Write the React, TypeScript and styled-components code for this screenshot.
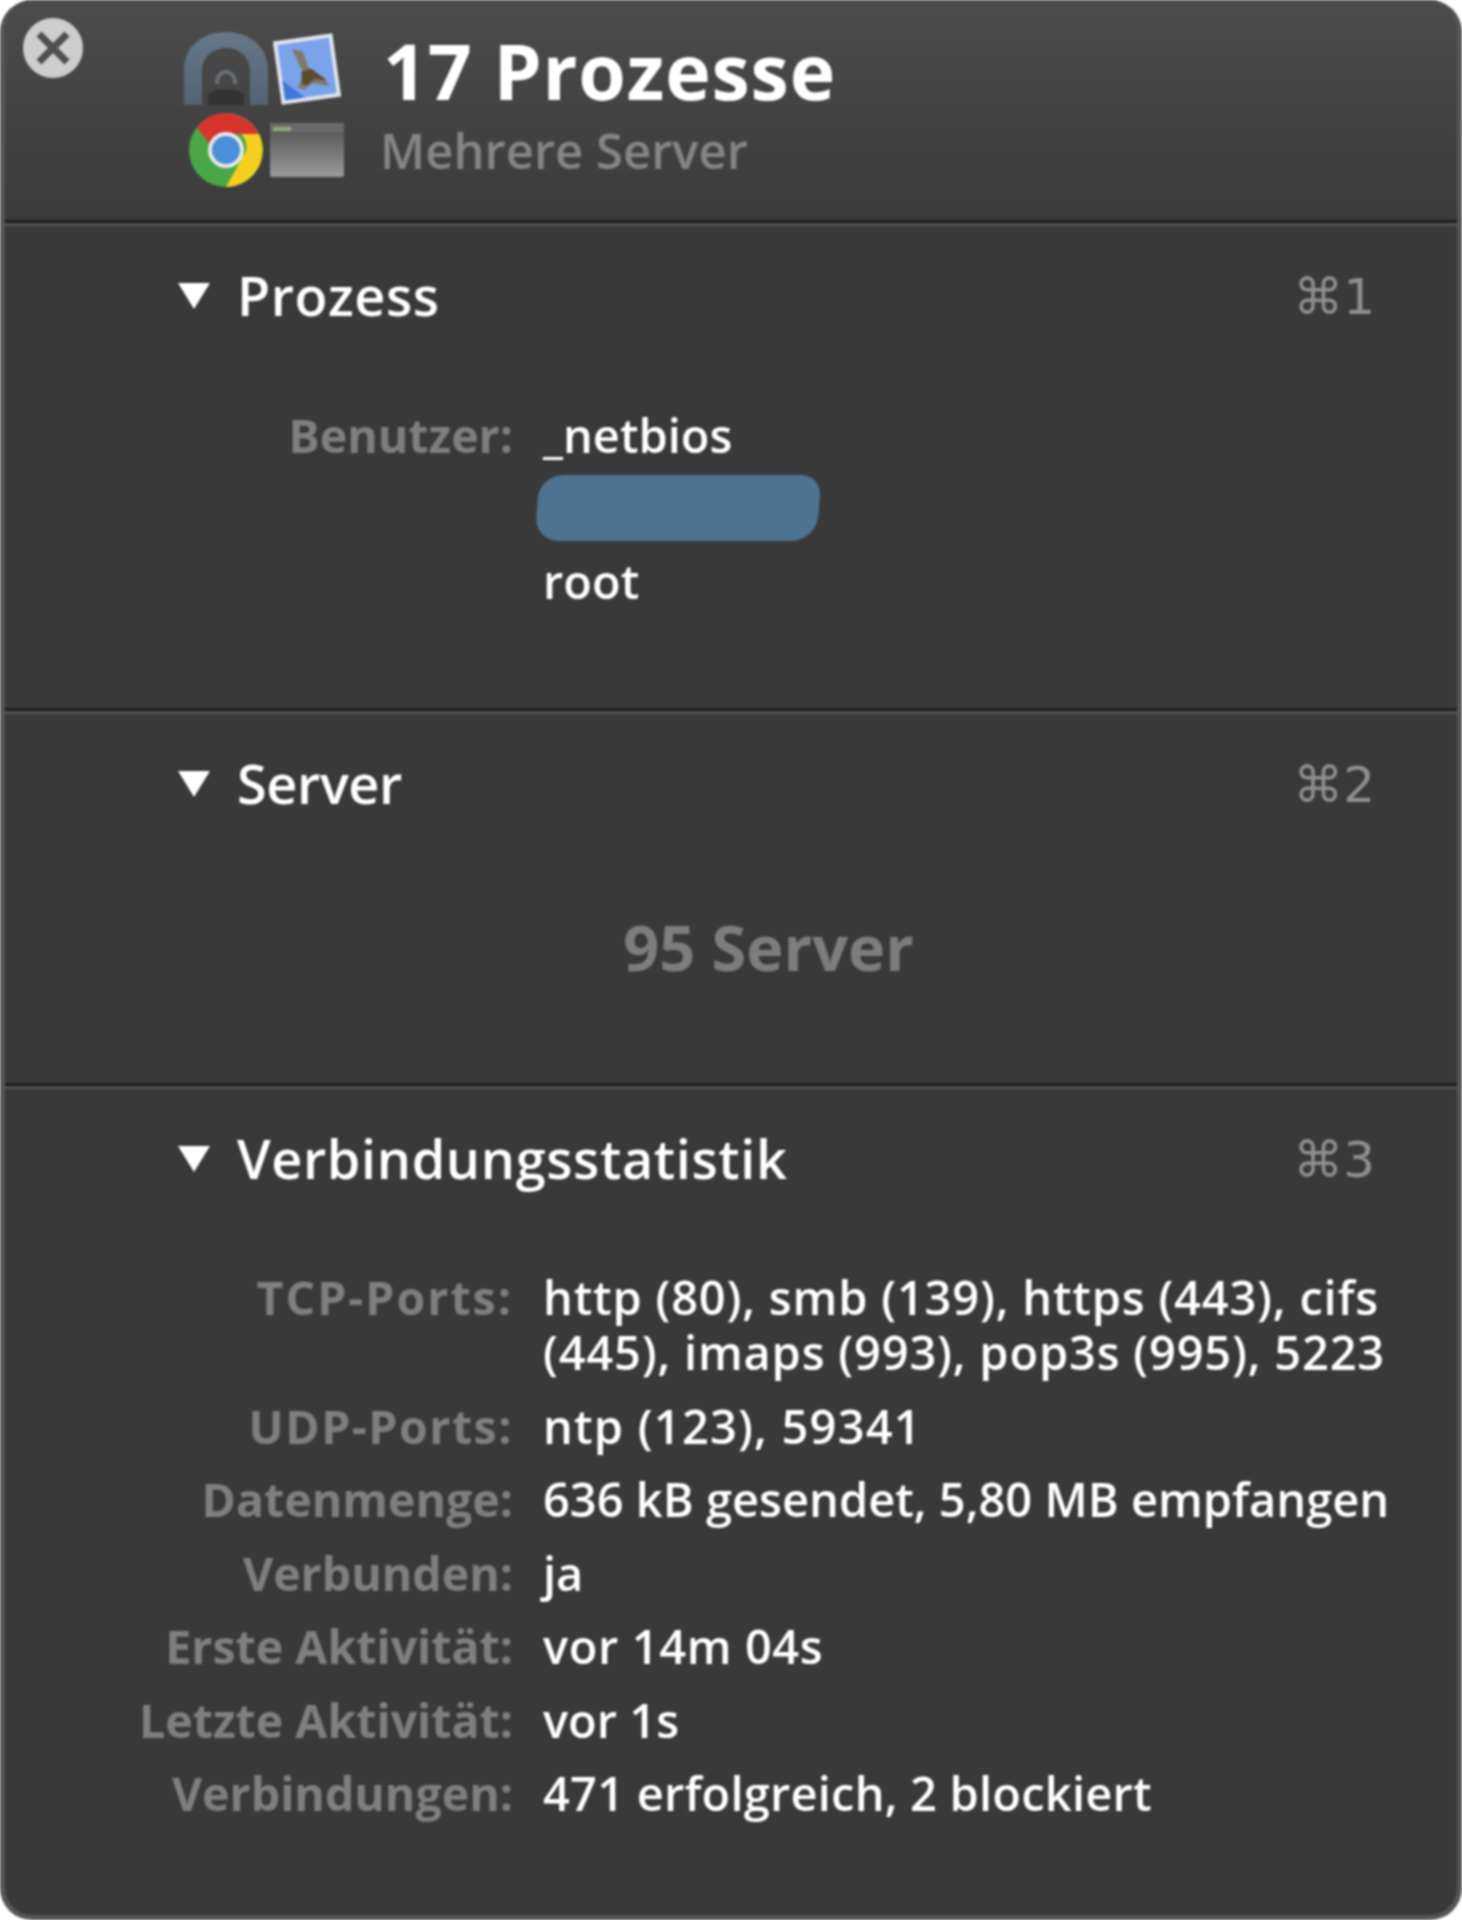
import React from 'react';
import styled, { createGlobalStyle } from 'styled-components';

const GlobalStyle = createGlobalStyle`
  html, body {
    margin: 0;
    background: #fff;
  }
`;

const Panel = styled.div`
  box-sizing: border-box;
  width: 1462px;
  height: 1920px;
  border-radius: 32px;
  overflow: hidden;
  position: relative;
  background: #393939;
  border-left: 5px solid #555;
  border-right: 5px solid #555;
  border-bottom: 5px solid #555;
  font-family: "Open Sans", "Liberation Sans", sans-serif;
  color: #fff;
  filter: blur(1px);
`;

const Header = styled.header`
  height: 223px;
  box-sizing: border-box;
  display: flex;
  padding: 26px 0 0 178px;
  gap: 40px;
  background: linear-gradient(#4c4c4c, #3b3b3b);
  border-bottom: 3px solid #1f1f1f;
`;

const CloseButton = styled.div`
  position: absolute;
  left: 18px;
  top: 18px;
  width: 60px;
  height: 60px;
  border-radius: 50%;
  background: #cdcdcd;
  display: flex;
  align-items: center;
  justify-content: center;
`;

const IconGrid = styled.div`
  display: grid;
  grid-template-columns: 86px 76px;
  grid-template-rows: 86px 76px;
  align-items: center;
  justify-items: center;
  width: 162px;
  height: 162px;
`;

const TitleBlock = styled.div`
  display: flex;
  flex-direction: column;
`;

const Title = styled.h1`
  margin: 10px 0 0 -2px;
  font-size: 77px;
  line-height: 70px;
  font-weight: 700;
  letter-spacing: 0.8px;
  color: #fff;
`;

const Subtitle = styled.div`
  font-size: 49px;
  line-height: 56px;
  font-weight: 600;
  color: #858585;
  margin: 16px 0 0 -5px;
`;

const Section = styled.section<{ $height: number; $last?: boolean }>`
  box-sizing: border-box;
  height: ${(p) => p.$height}px;
  padding: 39px 82px 0 173px;
  border-top: 3px solid #515151;
  border-bottom: ${(p) => (p.$last ? 'none' : '3px solid #1f1f1f')};
`;

const SectionHead = styled.div`
  display: flex;
  align-items: center;
  height: 60px;
`;

const Triangle = styled.span`
  width: 0;
  height: 0;
  border-left: 16px solid transparent;
  border-right: 16px solid transparent;
  border-top: 26px solid #fff;
  margin: 2px 27px 0 0;
`;

const SectionTitle = styled.h2<{ $spacing: number }>`
  margin: 0;
  flex: 1;
  font-size: 54px;
  line-height: 60px;
  font-weight: 600;
  letter-spacing: ${(p) => p.$spacing}px;
`;

const Shortcut = styled.span`
  font-family: "DejaVu Sans", sans-serif;
  font-size: 50px;
  line-height: 60px;
  margin-top: 4px;
  color: #8f8f8f;
`;

const Rows = styled.dl<{ $top: number }>`
  display: grid;
  grid-template-columns: 503px 1fr;
  column-gap: 30px;
  margin: ${(p) => p.$top}px -100px 0 -173px;
  padding-left: 5px;
`;

const Label = styled.dt<{ $spacing?: number }>`
  margin: 0;
  text-align: right;
  font-size: 46.5px;
  font-weight: 700;
  line-height: 73.4px;
  letter-spacing: ${(p) => p.$spacing ?? 0}px;
  color: #7f7f7f;
  white-space: nowrap;
`;

const Value = styled.dd<{ $wrap?: boolean; $spacing?: number }>`
  margin: 0;
  font-size: 47px;
  font-weight: 600;
  line-height: ${(p) => (p.$wrap ? '55px' : '73.4px')};
  padding-top: ${(p) => (p.$wrap ? '9px' : '0')};
  padding-bottom: ${(p) => (p.$wrap ? '10px' : '0')};
  letter-spacing: ${(p) => p.$spacing ?? 0}px;
  color: #fff;
  white-space: nowrap;
`;

const Redaction = styled.div`
  width: 282px;
  height: 66px;
  margin: 3px 0 4px -6px;
  background: #4e7390;
  border-radius: 24px 20px 26px 24px;
  transform: skewX(-4deg);
`;

const ServerCount = styled.div`
  text-align: center;
  font-size: 63px;
  font-weight: 700;
  line-height: 70px;
  color: #7d7d7d;
  margin: 99px 0 0 -16px;
`;

const ArchIcon = () => (
  <svg width="84" height="74" viewBox="0 0 84 74">
    <defs>
      <linearGradient id="arch" x1="0" y1="0" x2="0" y2="1">
        <stop offset="0" stopColor="#66788a" />
        <stop offset="1" stopColor="#566370" />
      </linearGradient>
    </defs>
    <path d="M0 73V38C0 15 18 0 42 0s42 15 42 38v35H66V40c0-15-10-24-24-24S18 25 18 40v33z" fill="url(#arch)" />
    <path d="M33 52c0-8 4-12 9-12s9 4 9 12" fill="none" stroke="#666f78" strokeWidth="4" />
    <path d="M24 73V62l8-4h20l8 4v11z" fill="#333" />
  </svg>
);

const MailIcon = () => (
  <svg width="72" height="76" viewBox="0 0 72 76">
    <g transform="rotate(-8 36 38)">
      <rect x="6" y="6" width="60" height="64" fill="#dfe4ec" />
      <rect x="10" y="10" width="52" height="56" fill="#7ba3ec" />
      <path d="M10 46l20 20H10z" fill="#3f78d8" />
      <path d="M24 16l10 4 4 18 14 12 4 8-16-5-10 5-6-3 8-12z" fill="#7d7a68" />
      <path d="M30 40l10-2 14 14-12-3-9 5-4-2z" fill="#5c4a2a" />
    </g>
  </svg>
);

const ChromeIcon = () => (
  <svg width="76" height="76" viewBox="0 0 76 76">
    <circle cx="38" cy="38" r="37" fill="#4aa748" />
    <path d="M9 15A37 37 0 0 1 71 22H38a17 17 0 0 0-16 11z" fill="#d8332d" />
    <path d="M71 22A37 37 0 0 1 38 75L54 46a17 17 0 0 0-1-24z" fill="#f4cf1f" />
    <circle cx="38" cy="38" r="18" fill="#e8e8e8" />
    <circle cx="38" cy="38" r="14" fill="#4a90d8" />
  </svg>
);

const WindowIcon = () => (
  <svg width="74" height="54" viewBox="0 0 74 54">
    <defs>
      <linearGradient id="win" x1="0" y1="0" x2="0" y2="1">
        <stop offset="0" stopColor="#4f4f4f" />
        <stop offset="1" stopColor="#9a9a9a" />
      </linearGradient>
    </defs>
    <rect width="74" height="54" rx="2" fill="url(#win)" />
    <rect width="74" height="9" fill="#6a6a6a" />
    <rect x="3" y="4" width="18" height="4" fill="#8fa878" />
  </svg>
);

const CloseIcon = () => (
  <svg width="38" height="38" viewBox="0 0 38 38">
    <path d="M5 5l28 28M33 5L5 33" stroke="#4f4f4f" strokeWidth="7" />
  </svg>
);

// label, value, and the tracking each value needs to fill its width
const stats: { label: string; value: string; labelSpacing?: number; spacing?: number }[] = [
  { label: 'UDP-Ports:', value: 'ntp (123), 59341', labelSpacing: 1.5, spacing: 1.2 },
  { label: 'Datenmenge:', value: '636 kB gesendet, 5,80 MB empfangen' },
  { label: 'Verbunden:', value: 'ja' },
  { label: 'Erste Aktivität:', value: 'vor 14m 04s', spacing: 0.6 },
  { label: 'Letzte Aktivität:', value: 'vor 1s' },
  { label: 'Verbindungen:', value: '471 erfolgreich, 2 blockiert', spacing: 0.2 },
];

export default function App() {
  return (
    <>
      <GlobalStyle />
      <Panel>
        <CloseButton>
          <CloseIcon />
        </CloseButton>
        <Header>
          <IconGrid>
            <ArchIcon />
            <MailIcon />
            <ChromeIcon />
            <WindowIcon />
          </IconGrid>
          <TitleBlock>
            <Title>17 Prozesse</Title>
            <Subtitle>Mehrere Server</Subtitle>
          </TitleBlock>
        </Header>
        <Section $height={488}>
          <SectionHead>
            <Triangle />
            <SectionTitle $spacing={0.5}>Prozess</SectionTitle>
            <Shortcut>⌘1</Shortcut>
          </SectionHead>
          <Rows $top={74}>
            <Label>Benutzer:</Label>
            <Value>_netbios</Value>
            <span />
            <Value><Redaction /></Value>
            <span />
            <Value>root</Value>
          </Rows>
        </Section>
        <Section $height={375}>
          <SectionHead>
            <Triangle />
            <SectionTitle $spacing={-0.4}>Server</SectionTitle>
            <Shortcut>⌘2</Shortcut>
          </SectionHead>
          <ServerCount>95 Server</ServerCount>
        </Section>
        <Section $height={826} $last>
          <SectionHead>
            <Triangle />
            <SectionTitle $spacing={0.6}>Verbindungsstatistik</SectionTitle>
            <Shortcut>⌘3</Shortcut>
          </SectionHead>
          <Rows $top={73}>
            <Label $spacing={2}>TCP-Ports:</Label>
            <Value $wrap $spacing={0.8}>
              http (80), smb (139), https (443), cifs
              <br />
              (445), imaps (993), pop3s (995), 5223
            </Value>
            {stats.map((row) => (
              <React.Fragment key={row.label}>
                <Label $spacing={row.labelSpacing}>{row.label}</Label>
                <Value $spacing={row.spacing}>{row.value}</Value>
              </React.Fragment>
            ))}
          </Rows>
        </Section>
      </Panel>
    </>
  );
}
